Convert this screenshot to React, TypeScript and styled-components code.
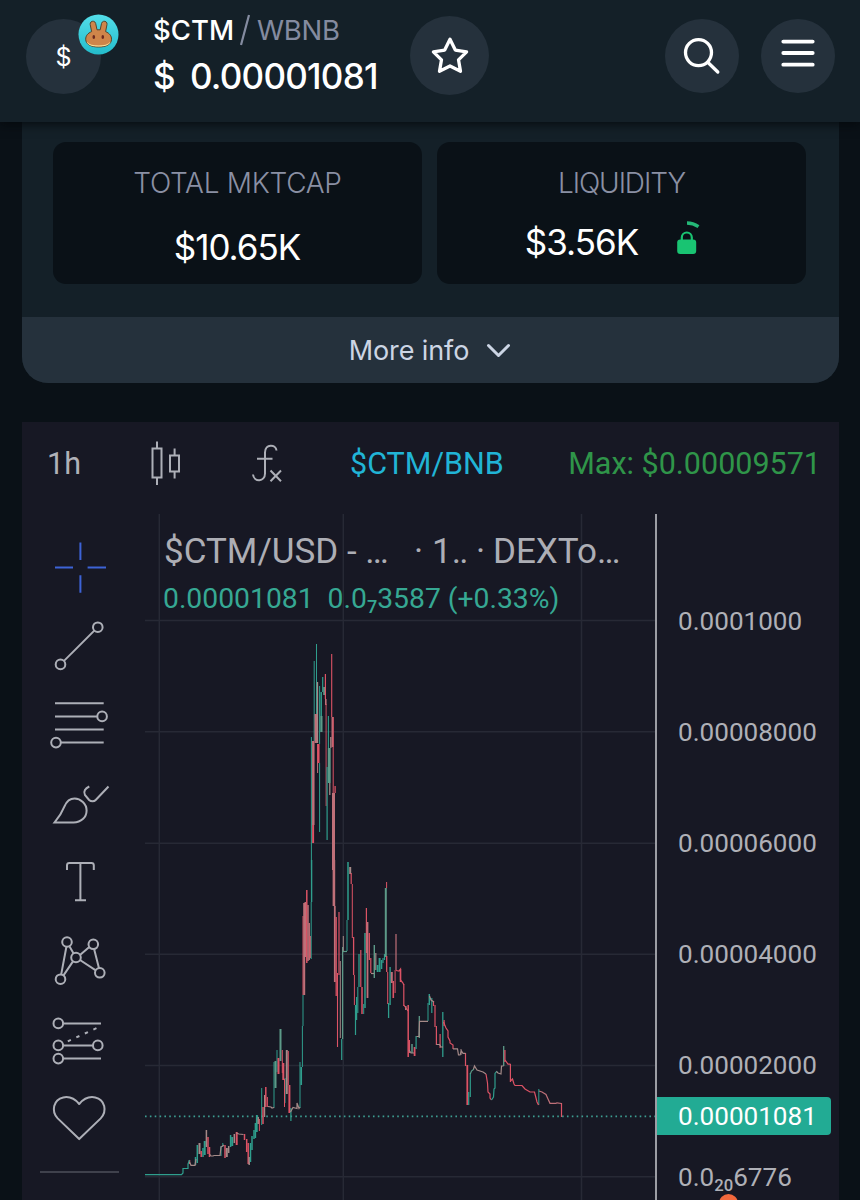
import React from 'react';
import styled, { createGlobalStyle } from 'styled-components';

const GlobalStyle = createGlobalStyle`
  * { box-sizing: border-box; }
  html, body { margin: 0; padding: 0; background: #0a1016; }
  body { width: 860px; height: 1200px; overflow: hidden; }
`;

const Page = styled.div`
  position: relative;
  width: 860px;
  height: 1200px;
  overflow: hidden;
  background: #0a1117;
  font-family: Inter, sans-serif;
  color: #fff;
`;

const Header = styled.header`
  position: relative;
  z-index: 2;
  display: flex;
  height: 122px;
  padding: 16px 25px 0 26px;
  background: #142028;
  box-shadow: 0 2px 10px rgba(4, 7, 11, 0.85);
`;

const Circle = styled.div<{ $size: number }>`
  flex: none;
  display: flex;
  align-items: center;
  justify-content: center;
  width: ${(p) => p.$size}px;
  height: ${(p) => p.$size}px;
  border-radius: 50%;
  background: #25313c;
`;

const Token = styled(Circle)`
  position: relative;
  margin-top: 3px;
  font-size: 25px;
`;

const Badge = styled.svg`
  position: absolute;
  left: 52px;
  top: -5px;
`;

const Pair = styled.div`
  width: 257px;
  margin-left: 52px;
`;

const PairName = styled.div`
  display: flex;
  height: 28px;
  align-items: center;
  font-size: 27.5px;
  line-height: 28px;
  font-weight: 500;
  white-space: nowrap;
`;

const Base = styled.span`
  letter-spacing: 0;
`;

const Slash = styled.svg`
  margin: 0 7px 0 6px;
`;

const Quote = styled.span`
  color: #848ba0;
  font-weight: 400;
  letter-spacing: -0.3px;
`;

const Price = styled.div`
  display: flex;
  gap: 15px;
  margin-top: 14px;
  font-size: 35px;
  line-height: 37px;
  font-weight: 500;
  letter-spacing: -0.75px;
`;

const Actions = styled.div`
  display: flex;
  gap: 22px;
  margin: 3px 0 0 auto;
`;

const InfoCard = styled.section`
  width: 817px;
  height: 261px;
  margin-left: 22px;
  border-radius: 0 0 26px 26px;
  overflow: hidden;
  background: #142028;
`;

const Stats = styled.div`
  display: flex;
  gap: 15px;
  height: 195px;
  padding: 20px 33px 33px 31px;
`;

const Stat = styled.div`
  flex: 1;
  border-radius: 13px;
  background: #0a1117;
  padding-top: 27px;
  display: flex;
  flex-direction: column;
  align-items: center;
`;

const StatLabel = styled.div<{ $track: number }>`
  font-size: 28px;
  line-height: 28px;
  font-weight: 300;
  color: #8a90a4;
  letter-spacing: ${(p) => p.$track}px;
`;

const StatValue = styled.div<{ $top: number; $end?: number }>`
  display: flex;
  align-items: center;
  gap: 37px;
  height: 40px;
  margin-top: ${(p) => p.$top}px;
  padding-right: ${(p) => p.$end ?? 0}px;
  font-size: 35px;
  line-height: 40px;
  letter-spacing: -1px;
`;

const LockIcon = styled.svg`
  margin-bottom: 8px;
`;

const MoreInfo = styled.div`
  display: flex;
  align-items: center;
  justify-content: center;
  gap: 17px;
  height: 66px;
  padding-right: 1px;
  background: #25313c;
  color: #ccd5e4;
  font-size: 27px;
  letter-spacing: -0.1px;
`;

const ChartPanel = styled.section`
  width: 817px;
  height: 778px;
  margin: 39px 0 0 22px;
  background: #171824;
  font-family: Roboto, sans-serif;
`;

const Toolbar = styled.div`
  display: flex;
  align-items: center;
  height: 92px;
  padding: 0 18px 10px 25px;
  color: #b0b1b8;
  font-size: 30.5px;
`;

const Interval = styled.span`
  width: 103px;
`;

const CandleIcon = styled.svg`
  flex: none;
  margin-right: 69px;
`;

const Symbol = styled.span`
  margin-left: 67px;
  color: #21b4d6;
  white-space: nowrap;
`;

const MaxPrice = styled.span`
  margin-left: auto;
  color: #2f9549;
  white-space: nowrap;
`;

const ChartBody = styled.div`
  display: flex;
  height: 686px;
`;

const ToolRail = styled.div`
  width: 123px;
  padding: 14px 0 0 18px;
`;

const Tool = styled.svg`
  display: block;
  fill: none;
  stroke: #adafb7;
  stroke-width: 2;
`;

const RailDivider = styled.div`
  width: 79px;
  height: 2px;
  margin-top: 14px;
  background: #3f414c;
`;

const Plot = styled.div`
  position: relative;
  width: 512px;
  border-right: 2px solid #9c9da4;
`;

const PlotSvg = styled.svg`
  display: block;
`;

const Legend = styled.div`
  position: absolute;
  left: 18px;
  top: 17px;
  white-space: nowrap;
`;

const LegendTitle = styled.div`
  display: flex;
  height: 42px;
  padding-left: 1px;
  color: #adaeb5;
  font-size: 35px;
  line-height: 42px;
`;

const LegendPart = styled.span<{ $width: number }>`
  width: ${(p) => p.$width}px;
`;

const LegendValues = styled.div`
  display: flex;
  gap: 14px;
  margin-top: 10px;
  font-size: 28.3px;
  line-height: 32px;
  color: #36a893;
`;

const Small = styled.span<{ $drop: number }>`
  display: inline-block;
  font-size: 0.64em;
  line-height: 1;
  font-weight: 500;
  transform: translateY(${(p) => p.$drop}px);
`;

const Axis = styled.div`
  position: relative;
  flex: 1;
  height: 686px;
  padding-top: 51px;
  overflow: hidden;
`;

const Tick = styled.div`
  height: 111.2px;
  padding-left: 21px;
  display: flex;
  align-items: center;
  white-space: nowrap;
  color: #afb0b7;
  font-size: 26.1px;
`;

const CurrentPrice = styled.div`
  position: absolute;
  left: -1px;
  top: 583px;
  width: 175px;
  height: 38px;
  padding-left: 22px;
  border-radius: 0 4px 4px 0;
  background: #22ab94;
  color: #fff;
  font-size: 26.1px;
  line-height: 39px;
`;

const Alert = styled.div`
  position: absolute;
  left: 62px;
  top: 680px;
  width: 19px;
  height: 19px;
  border-radius: 50%;
  background: #f2683c;
`;

const palette: Record<string, string> = {
  g: '#2f9e8d',
  r: '#dc5365',
  t: '#a58a88',
  p: '#bf7079',
  m: '#5d9a88',
};

// Price bars: colour key, x, high, low, width.
const bars = `
r189.5,1160,1164,1.5 g195.5,1157,1165,1.5 g197.3,1145,1163,1.5 t199.5,1143,1154,2 r201.2,1151,1157,1.5 g203,1148,1157,1.5 g204.7,1141,1155,2 t206.4,1130,1147,1.5
r208,1137,1154,1.5 r209.5,1147,1157,1.5 g221,1146,1156,1 g222.8,1143,1147,1 r225,1145,1158,1.5 t226.8,1148,1157,2 t228.7,1146,1153,1.5 g230.6,1135,1147,1.5 g232.2,1137,1146,2
t234.3,1134,1143,1.5 r236.7,1132,1145,2 r244.5,1134,1140,1.5 r246.7,1139,1152,1.5 r248.2,1143,1164,1.5 t249.2,1157,1165,1.5 g250.5,1143,1162,1.5 g252,1136,1150,1.5
g254,1130,1139,1.5 g255.4,1123,1138,1.5 g256.8,1115,1132,1.8 t258.2,1117,1124,1.5 r259.4,1119,1131,1 g261.7,1088,1125,1 r263,1107,1124,1.5 t264.6,1095,1117,1.2
r265.8,1087,1107,1.5 r267.4,1097,1107,1
g274,1062,1108,1 m275.5,1061,1088,2 g277,1050,1072,1 r278.5,1058,1074,2 m280.5,1029,1061,2 r282.3,1050,1073,1 r283.3,1063,1080,2 g285,1078,1103,1 r284.5,1079,1107,1 t286.8,1050,1094,2
r288.3,1051,1085,1 r289.4,1085,1113,2 g290.9,1108,1121,1.2 g300,1062,1108,1 g301.2,1067,1085,1.7 g302.4,1026,1067,1 g303,995,1026,1 r303,916,995,1 p304.2,903,995,2
p305.5,902,957,2 r306.8,890,963,1.5 p308,905,961,1.5 p309.2,923,960,1.5 r310.2,936,958,1.6 g311.2,902,959,1 g311.6,860,902,1.4
g311.4,737,870,1 p313.3,741,825,2.5 r313.1,825,843,2 g314.2,661,741,1 p315.8,714,743,2.5 g316.5,644,714,1 t317.5,682,743,1.3 r318.3,744,763,2.5 p317.6,763,773,1
g319.6,686,744,1 g319.6,763,832,1 g321.2,692,732,1.5 m321.5,716,732,2 g322.7,677,692,1.2 m324.2,687,695,2 r325.4,674,699,1.2 p325.8,699,705,1.6 r326.1,704,806,0.9
g327.1,767,840,1.2 g328.4,716,767,1.1 m329.3,748,783,2.8 t329.8,783,795,1.3 t330.8,737,748,1.3 r331.7,654,717,1.1 p332.5,717,747,2 r333.2,717,793,1 p333.5,793,870,3 r335.1,786,793,1.3
p333.9,860,906,2.6 p334.8,906,982,1.8 r336.2,917,996,1.3 r337.5,973,1047,1.1 r339,912,975,1.2 t340.3,961,1038,1 g341.7,1039,1060,1.2 m342.6,947,1039,1.2 t343.3,936,952,1
g347,920,951,1 g348,862,920,1.5 t350.2,867,874,2 r351.2,873,884,1.2 r352.3,884,938,1 r353.6,937,975,1.3 r354.4,975,1005,1 g355.5,1005,1035,1.2 g356.6,997,1020,1.2 g357.8,987,1013,1.1
g359,954,987,1.3 r360.8,950,987,1.2 r362,987,1014,1.5 g363.7,1004,1014,1 g365,933,1008,1.5 r366.4,908,953,1.2 p367.5,922,998,1.8 r369.3,933,960,1.3 r370.8,958,973,1.2
m374.3,945,978,1.4 t375.8,953,970,1.2 g377.6,965,972,1.8 g379.6,958,972,2 g381.6,960,969,1.4 g383,958,963,1.2 g384.5,954,960,1.2 m385.8,888,957,2 r386.6,882,888,1
r386.7,956,972,1.3 r387.7,972,1004,1 g388.6,1003,1018,1.3 g390.1,967,1005,1.4 p391.8,972,983,2 r393.3,981,998,1.6 r395.1,970,993,1 p396,934,970,1.2
r400.5,969,982,1.5 r403.8,984,1006,1.2 t405.8,1006,1010,1.5 r408.2,1005,1057,1.5 r409.4,1040,1053,1.3 m412,1044,1053,1.5 r414.6,1047,1056,1.8 g416.1,1036,1049,1.2
m419.3,1016,1038,1.3 g428,1003,1021,1 g429.3,994,1005,1.5 g431.8,998,1013,1.2 r433.5,1001,1006,1.2 r435,1005,1027,1.2 r436.4,1026,1045,1.2 r440.1,1034,1048,1.2
g442.8,1012,1057,1.3 r444.1,1020,1026,1.2 t461,1049,1055,1 r465.5,1053,1066,1.2 r467.3,1065,1105,1.8 g468.7,1092,1105,1.2 g470.3,1073,1097,1.2
m503.7,1046,1066,1.3 r504.9,1050,1062,1.3 r510.4,1064,1082,1.2 g538.8,1089,1105,1 r561.5,1103,1117,1.2
`
  .trim()
  .split(/\s+/)
  .map((b) => {
    const [x, hi, lo, w] = b.slice(1).split(',').map(Number);
    return { color: palette[b[0]], x, hi, lo, w };
  });

const steps: [string, string][] = [
  ['g', '145,1174.7 181.5,1174.7 183,1173 183,1168.5 188,1168.5 188,1164 189.5,1160'],
  ['t', '189.5,1162 191,1165.3 195,1165.3 196,1159'],
  ['t', '209.5,1154 211,1156 213,1156 214,1155.5 220,1155.5 221,1147 224,1145'],
  ['t', '236,1133 239,1134 243.5,1134.5'],
  ['t', '268,1106.5 271,1107 272,1108 274,1107.5'],
  ['t', '290.5,1112 293,1107.5 297,1108.5 297,1103 299,1108.5 300,1107'],
  ['m', '343,951.5 347,951.5'],
  ['t', '371,973.5 374,973.5'],
  ['r', '396,970.5 399,971 400.5,969 400.5,980 403,983 403.8,985'],
  ['r', '403.8,1005 406,1008 408,1011'],
  ['t', '409,1050 411,1053 414,1053'],
  ['t', '416.5,1036.5 419,1036.5 419.5,1021.3 428,1021.3'],
  ['t', '429.5,996 431,1000 434,1002'],
  ['t', '436.5,1044.5 439.5,1044.5 441,1047 443,1047'],
  ['r', '443.5,1022 446,1028 448,1031 448,1037 450,1041 450,1043 453,1045 453,1049'],
  ['t', '453,1048.8 457.5,1048.8 458.5,1055 460,1055 461.5,1051 463,1053.3 465.5,1053.3'],
  ['m', '470.3,1074 471.5,1071 474,1069'],
  ['t', '473.5,1069 474.5,1066 477,1070 483,1072 486,1074'],
  ['r', '486,1074 487.5,1083 488,1092 490,1094 490,1098 491.5,1100'],
  ['g', '491.5,1100 493.5,1097 494,1089 495,1088 495,1073.5 497,1071'],
  ['t', '496.5,1071.5 498,1073 501,1074 501.5,1066 503.5,1066'],
  ['r', '505,1060 508,1064.2 510.5,1064.2'],
  ['r', '510.5,1081 512.5,1079 514,1084 515,1085.5 522,1085.5 525,1089 530,1092 534.5,1092 536,1098 537,1102 538.5,1105'],
  ['p', '539,1091 542,1092 546,1094.5 548,1099 550,1103.3 556,1103.3 557,1102.8 561.5,1103.5'],
];

const gridX = [159.3, 343.3, 581.5];
const gridY = [620.5, 731.8, 843.2, 954.3, 1065.6, 1176.8];

const toolShapes: React.ReactNode[] = [
  <g key="c" stroke="#3d63d6">
    <path d="M80.4 542.5v17.5M80.4 575.3v17.4M55 567.6h18M87.6 567.6h18.4" />
  </g>,
  <g key="l">
    <circle cx="60.5" cy="664" r="4.8" />
    <circle cx="97.8" cy="626.8" r="4.8" />
    <path d="M64 660.5L94.3 630.2" />
  </g>,
  <g key="f">
    <path d="M55 703.4h48.7M55 716.6h42M55 729.8h48.7M61 742.8h42.7" />
    <circle cx="102.1" cy="716.6" r="4.8" />
    <circle cx="56" cy="742.8" r="4.8" />
  </g>,
  <g key="b">
    <path d="M54.6 822.2C60 815.8 62.600 811 64.600 806c2-5 6-7.800 10-7.800 6 0 12 5.400 12 12 0 7-5.600 12-13 12z" />
    <path d="M89.300 786.300c-4 1.800-6.200 5-4.400 8.400l4.200 5.100c2 1.800 5 1.800 6.600 0l12.800-13.500" />
  </g>,
  <g key="t">
    <path d="M67 870.3v-4.600q0-2.400 2.400-2.400h22q2.400 0 2.400 2.400v4.600M80.400 863.300v37.400M75 900.700h11" />
  </g>,
  <g key="p">
    <path d="M66.4 946.8L61.2 974.4M69.4 946.2L73.6 953.4M80 954.9L89.3 947M94.1 949L99 968.2M80 960L95.8 970.4M73 961.4L63.5 975.4" />
    <circle cx="67" cy="942" r="4.8" />
    <circle cx="93.3" cy="944.3" r="4.8" />
    <circle cx="76" cy="957.5" r="4.8" />
    <circle cx="60.5" cy="979.2" r="4.8" />
    <circle cx="99.8" cy="972.8" r="4.8" />
  </g>,
  <g key="r">
    <circle cx="58.3" cy="1023" r="4.8" />
    <circle cx="58.3" cy="1045" r="4.8" />
    <circle cx="97.8" cy="1045" r="4.8" />
    <circle cx="58.3" cy="1058.2" r="4.8" />
    <path d="M63 1023h38M63 1045h30M63 1058.2h38" />
    <path d="M67.8 1041L98 1027" strokeDasharray="3.4 6" />
  </g>,
  <g key="h">
    <path
      strokeLinejoin="round"
      d="M79.2 1139.3L57.7 1118.6C51 1111.8 53.3 1099.6 63.2 1097.6c6.3-1.3 12.2 2 16 6.6 3.8-4.6 9.7-7.9 16-6.6 9.9 2 12.2 14.2 5.5 21z"
    />
  </g>,
];

const PancakeBadge = () => (
  <Badge width="41" height="41" viewBox="0 0 41 41">
    <defs>
      <linearGradient id="teal" x1="0" y1="0" x2="0" y2="1">
        <stop offset="0" stopColor="#53dee9" />
        <stop offset="1" stopColor="#24bccb" />
      </linearGradient>
    </defs>
    <circle cx="20.5" cy="20.5" r="20" fill="url(#teal)" />
    <path
      fill="#cf854a"
      stroke="#54462f"
      strokeWidth="1"
      d="M13.6 17.6L12.2 10.5c-.7-3.6 4.7-4.6 5.5-1l1.3 6.3h3.2l1.3-6.3c.8-3.6 6.200-2.600 5.500 1l-1.400 7.100c4 1.700 5.900 4.300 5.900 7.600 0 5.200-5.300 7.800-12.900 7.800S7.700 30.400 7.700 25.200c0-3.300 1.900-5.900 5.900-7.600z"
    />
    <path fill="#f8e19a" d="M8.600 27.500c2.400 3 6.700 4 12 4s9.600-1 12-4c-1.200 3.800-5.700 5.100-12 5.100s-10.800-1.300-12-5.100z" />
    <ellipse cx="15.8" cy="23" rx="1.3" ry="1.9" fill="#6b2a20" />
    <ellipse cx="24.8" cy="23" rx="1.3" ry="1.9" fill="#6b2a20" />
  </Badge>
);

const ticks = ['0.0001000', '0.00008000', '0.00006000', '0.00004000', '0.00002000'];

export default function App() {
  return (
    <Page>
      <GlobalStyle />
      <Header>
        <Token $size={75}>
          $
          <PancakeBadge />
        </Token>
        <Pair>
          <PairName>
            <Base>$CTM</Base>
            <Slash width="10" height="32" viewBox="0 0 10 32">
              <path d="M1 31L9 1" stroke="#848ba0" strokeWidth="2.2" />
            </Slash>
            <Quote>WBNB</Quote>
          </PairName>
          <Price>
            <span>$</span>
            <span>0.00001081</span>
          </Price>
        </Pair>
        <Circle $size={79}>
          <svg width="40" height="40" viewBox="0 0 40 40" fill="none" stroke="#fff" strokeWidth="3.3" strokeLinejoin="round">
            <path d="M20 3.3L25.3 14.1L36.6 15.8L28.5 23.8L30.5 35.3L20 30L9.5 35.3L11.5 23.8L3.4 15.8L14.7 14.1Z" />
          </svg>
        </Circle>
        <Actions>
          <Circle $size={74}>
            <svg width="38" height="38" viewBox="0 0 38 38" fill="none" stroke="#fff" strokeWidth="3.3" strokeLinecap="round">
              <circle cx="15.5" cy="15.6" r="13" />
              <path d="M25 25.5L34.8 35" />
            </svg>
          </Circle>
          <Circle $size={74}>
            <svg width="36" height="36" viewBox="0 0 36 36" stroke="#fff" strokeWidth="3.8" strokeLinecap="round">
              <path d="M3.3 3.6h29.400M3.300 15h29.400M3.300 26.700h29.400" />
            </svg>
          </Circle>
        </Actions>
      </Header>

      <InfoCard>
        <Stats>
          <Stat>
            <StatLabel $track={-0.3}>TOTAL MKTCAP</StatLabel>
            <StatValue $top={30} $end={1}>$10.65K</StatValue>
          </Stat>
          <Stat>
            <StatLabel $track={-1.1}>LIQUIDITY</StatLabel>
            <StatValue $top={25} $end={17}>
              $3.56K
              <LockIcon width="26" height="36" viewBox="0 0 26 36">
                <path d="M12 3q6 0 11.500 3.600" fill="none" stroke="#24b877" strokeWidth="3.4" />
                <rect x="2.2" y="19.5" width="19" height="14.5" rx="3" fill="#19c472" />
                <path d="M6.800 21v-3.500a5 5 0 0 1 10 0V21" fill="none" stroke="#19c472" strokeWidth="2.2" />
              </LockIcon>
            </StatValue>
          </Stat>
        </Stats>
        <MoreInfo>
          <span>More info</span>
          <svg width="25" height="16" viewBox="0 0 25 16" fill="none" stroke="#ccd5e4" strokeWidth="3" strokeLinecap="round" strokeLinejoin="round">
            <path d="M2.5 3.5L12.5 13.5L22.5 3.5" />
          </svg>
        </MoreInfo>
      </InfoCard>

      <ChartPanel>
        <Toolbar>
          <Interval>1h</Interval>
          <CandleIcon width="33" height="46" viewBox="0 0 33 46" fill="none" stroke="#adafb7" strokeWidth="2">
            <path d="M2.500 8.500h9v29h-9zM7 1.500v7M7 37.500v7.500M20 15.500h9v16h-9zM24.600 8.500v7M24.600 31.500v7" />
          </CandleIcon>
          <svg width="31" height="40" viewBox="0 0 31 40" fill="none" stroke="#adafb7" strokeWidth="2">
            <path d="M24.500 7.500c-.5-6.500-11.500-7-11.500 2v21c0 8.500-11 9-12 1M5 15.800h15.500M18.500 27.500L29 38.200M29 27.500L18.500 38.200" />
          </svg>
          <Symbol>$CTM/BNB</Symbol>
          <MaxPrice>Max: $0.00009571</MaxPrice>
        </Toolbar>
        <ChartBody>
          <ToolRail>
            {toolShapes.map((shape, i) => (
              <Tool key={i} width="80" height="78.6" viewBox={`40 ${528 + 78.6 * i} 80 78.6`}>
                {shape}
              </Tool>
            ))}
            <RailDivider />
          </ToolRail>
          <Plot>
            <PlotSvg width="510" height="686" viewBox="145 514 510 686">
              {gridX.map((x) => (
                <path key={x} d={`M${x} 514V1200`} stroke="#272935" strokeWidth="1.5" />
              ))}
              {gridY.map((y) => (
                <path key={y} d={`M145 ${y}H656`} stroke="#272935" strokeWidth="1.5" />
              ))}
              <path d="M145 1116.4H656" stroke="#3d9d91" strokeWidth="1.6" strokeDasharray="1.6 3.25" />
              {bars.map((b, i) => (
                <path key={i} d={`M${b.x} ${b.hi}V${b.lo}`} stroke={b.color} strokeWidth={b.w} />
              ))}
              {steps.map(([c, pts], i) => (
                <polyline key={i} points={pts} fill="none" stroke={palette[c]} strokeWidth="1.2" />
              ))}
            </PlotSvg>
            <Legend>
              <LegendTitle>
                <LegendPart $width={250}>$CTM/USD - …</LegendPart>
                <LegendPart $width={18}>·</LegendPart>
                <LegendPart $width={44}>1‥</LegendPart>
                <LegendPart $width={17}>·</LegendPart>
                <span>DEXTo…</span>
              </LegendTitle>
              <LegendValues>
                <span>0.00001081</span>
                <span>
                  0.0<Small $drop={5}>7</Small>3587 (+0.33%)
                </span>
              </LegendValues>
            </Legend>
          </Plot>
          <Axis>
            {ticks.map((t) => (
              <Tick key={t}>{t}</Tick>
            ))}
            <Tick>
              <span>
                0.0<Small $drop={5}>20</Small>6776
              </span>
            </Tick>
            <CurrentPrice>0.00001081</CurrentPrice>
            <Alert />
          </Axis>
        </ChartBody>
      </ChartPanel>
    </Page>
  );
}
